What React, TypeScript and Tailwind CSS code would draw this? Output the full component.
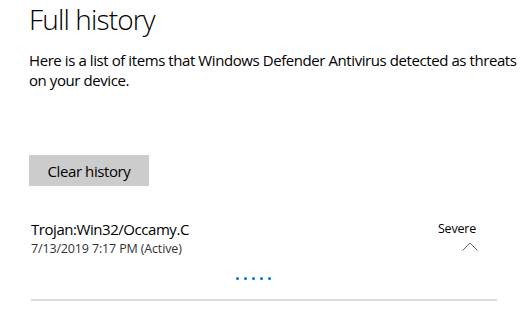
import React from "react";

export default function App() {
  return (
    <div
      className="w-[532px] h-[318px] bg-white overflow-hidden pl-[29px] text-black"
      style={{ fontFamily: '"Open Sans", "Noto Sans", sans-serif' }}
    >
      <h1 className="pt-[1px] text-[28px] leading-[36px] font-light tracking-[-0.85px]">
        Full history
      </h1>
      <p className="mt-[13px] w-[500px] text-[15px] leading-[20px] tracking-[-0.42px]">
        Here is a list of items that Windows Defender Antivirus detected as threats on your device.
      </p>
      <button className="mt-[65px] flex h-[31px] w-[120px] items-center justify-center bg-[#cccccc] text-[15px] leading-[20px] tracking-[-0.4px]">
        Clear history
      </button>
      <div className="mt-[33px] flex w-[449px] justify-between pl-[2px]">
        <div className="flex flex-col">
          <span className="text-[15px] leading-[20px] tracking-[-0.45px]">Trojan:Win32/Occamy.C</span>
          <span className="mt-[2px] text-[12.5px] leading-[16px] text-[#333333] tracking-[-0.15px]">
            7/13/2019 7:17 PM (Active)
          </span>
        </div>
        <div className="flex flex-col items-end pt-[2px]">
          <span className="mr-[2px] text-[12.5px] leading-[16px] tracking-[-0.2px]">Severe</span>
          <svg width="16" height="9" viewBox="0 0 16 9" className="mt-[5px]">
            <path d="M0.5 8.5 L8 1 L15.5 8.5" fill="none" stroke="#666666" strokeWidth="1" />
          </svg>
        </div>
      </div>
      <div className="ml-[207px] mt-[20px] flex gap-[5px]">
        {[0, 1, 2, 3, 4].map((i) => (
          <span key={i} className="h-[3px] w-[3px] rounded-full bg-[#0078d7]" />
        ))}
      </div>
      <div className="ml-[2px] mt-[19px] h-[2px] w-[466px] bg-[#dcdcdc]" />
    </div>
  );
}
